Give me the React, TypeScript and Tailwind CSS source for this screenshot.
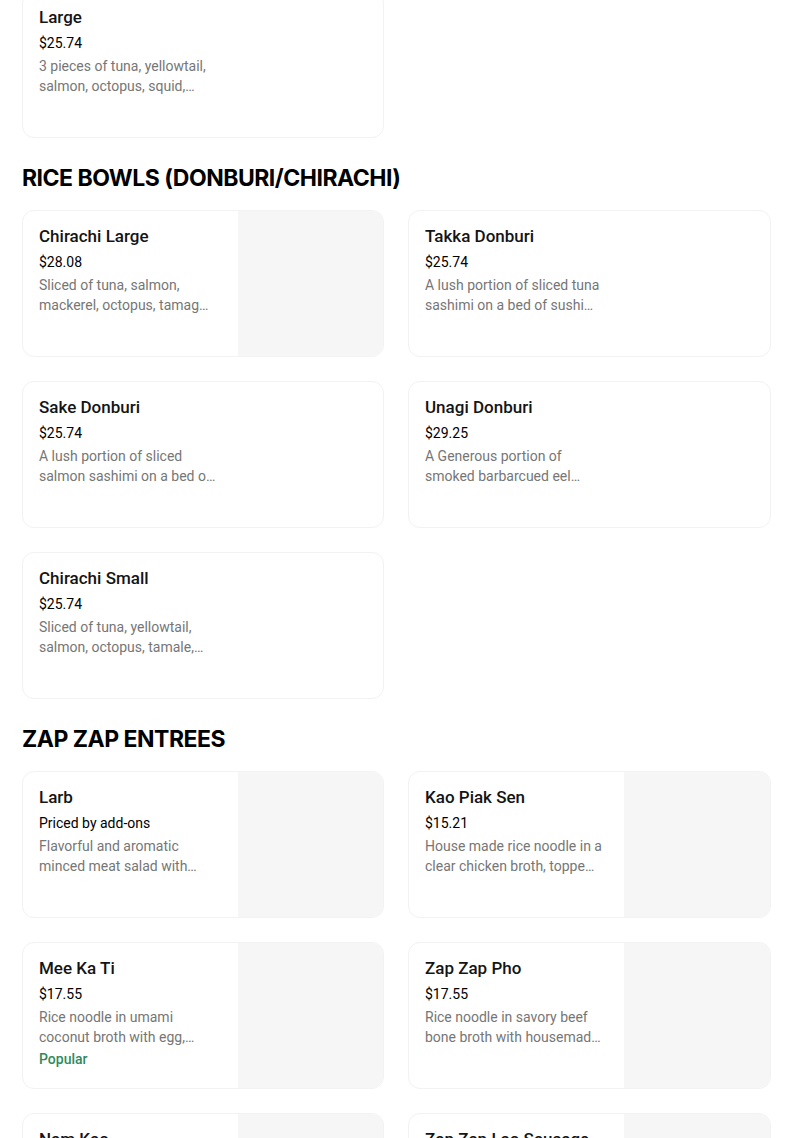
type Item = {
  name: string;
  price: string;
  lines: [string, string];
  image?: boolean;
  popular?: boolean;
};

type Section = {
  title?: string;
  items: Item[];
};

const sections: Section[] = [
  {
    items: [
      {
        name: "Large",
        price: "$25.74",
        lines: ["3 pieces of tuna, yellowtail,", "salmon, octopus, squid,…"],
      },
    ],
  },
  {
    title: "RICE BOWLS (DONBURI/CHIRACHI)",
    items: [
      {
        name: "Chirachi Large",
        price: "$28.08",
        lines: ["Sliced of tuna, salmon,", "mackerel, octopus, tamag…"],
        image: true,
      },
      {
        name: "Takka Donburi",
        price: "$25.74",
        lines: ["A lush portion of sliced tuna", "sashimi on a bed of sushi…"],
      },
      {
        name: "Sake Donburi",
        price: "$25.74",
        lines: ["A lush portion of sliced", "salmon sashimi on a bed o…"],
      },
      {
        name: "Unagi Donburi",
        price: "$29.25",
        lines: ["A Generous portion of", "smoked barbarcued eel…"],
      },
      {
        name: "Chirachi Small",
        price: "$25.74",
        lines: ["Sliced of tuna, yellowtail,", "salmon, octopus, tamale,…"],
      },
    ],
  },
  {
    title: "ZAP ZAP ENTREES",
    items: [
      {
        name: "Larb",
        price: "Priced by add-ons",
        lines: ["Flavorful and aromatic", "minced meat salad with…"],
        image: true,
      },
      {
        name: "Kao Piak Sen",
        price: "$15.21",
        lines: ["House made rice noodle in a", "clear chicken broth, toppe…"],
        image: true,
      },
      {
        name: "Mee Ka Ti",
        price: "$17.55",
        lines: ["Rice noodle in umami", "coconut broth with egg,…"],
        image: true,
        popular: true,
      },
      {
        name: "Zap Zap Pho",
        price: "$17.55",
        lines: ["Rice noodle in savory beef", "bone broth with housemad…"],
        image: true,
      },
      {
        name: "Nam Kao",
        price: "$16.38",
        lines: ["Crispy rice salad with", "cured pork, peanuts…"],
        image: true,
      },
      {
        name: "Zap Zap Lao Sausage",
        price: "$16.38",
        lines: ["Housemade lao sausage", "with herbs and sticky…"],
        image: true,
      },
    ],
  },
];

function MenuCard({ item }: { item: Item }) {
  return (
    <div className="flex h-[147px] overflow-hidden rounded-xl border border-[#f2f2f2] bg-white">
      <div className="w-[215px] shrink-0 pl-4 pt-[13px]">
        <div className="text-[17px] font-medium leading-6 text-[#141414]">
          {item.name}
        </div>
        <div className="mt-[4px] text-[14px] leading-5 text-black">{item.price}</div>
        <div className="mt-[3px] text-[14px] leading-5 text-[#767676]">
          <div className="whitespace-nowrap">{item.lines[0]}</div>
          <div className="whitespace-nowrap">{item.lines[1]}</div>
        </div>
        {item.popular && (
          <div className="mt-[2px] text-[14px] font-medium leading-5 text-[#2f8a5a]">
            Popular
          </div>
        )}
      </div>
      {item.image && <div className="flex-1 bg-[#f6f6f6]"></div>}
    </div>
  );
}

export default function App() {
  return (
    <div
      className="min-h-screen bg-white"
      style={{ fontFamily: "Roboto, 'Liberation Sans', sans-serif" }}
    >
      <div className="ml-[22px] mt-[-9px] w-[749px]">
        {sections.map((section, index) => (
          <div key={index}>
            {section.title && (
              <h2
                className="mb-4 mt-6 text-[23px] font-bold leading-8 tracking-[-0.5px] text-black"
                style={{ fontFamily: "Inter, 'Liberation Sans', sans-serif" }}
              >
                {section.title}
              </h2>
            )}
            <div className="grid grid-cols-[362px_363px] gap-6">
              {section.items.map((item) => (
                <MenuCard key={item.name} item={item} />
              ))}
            </div>
          </div>
        ))}
      </div>
    </div>
  );
}
